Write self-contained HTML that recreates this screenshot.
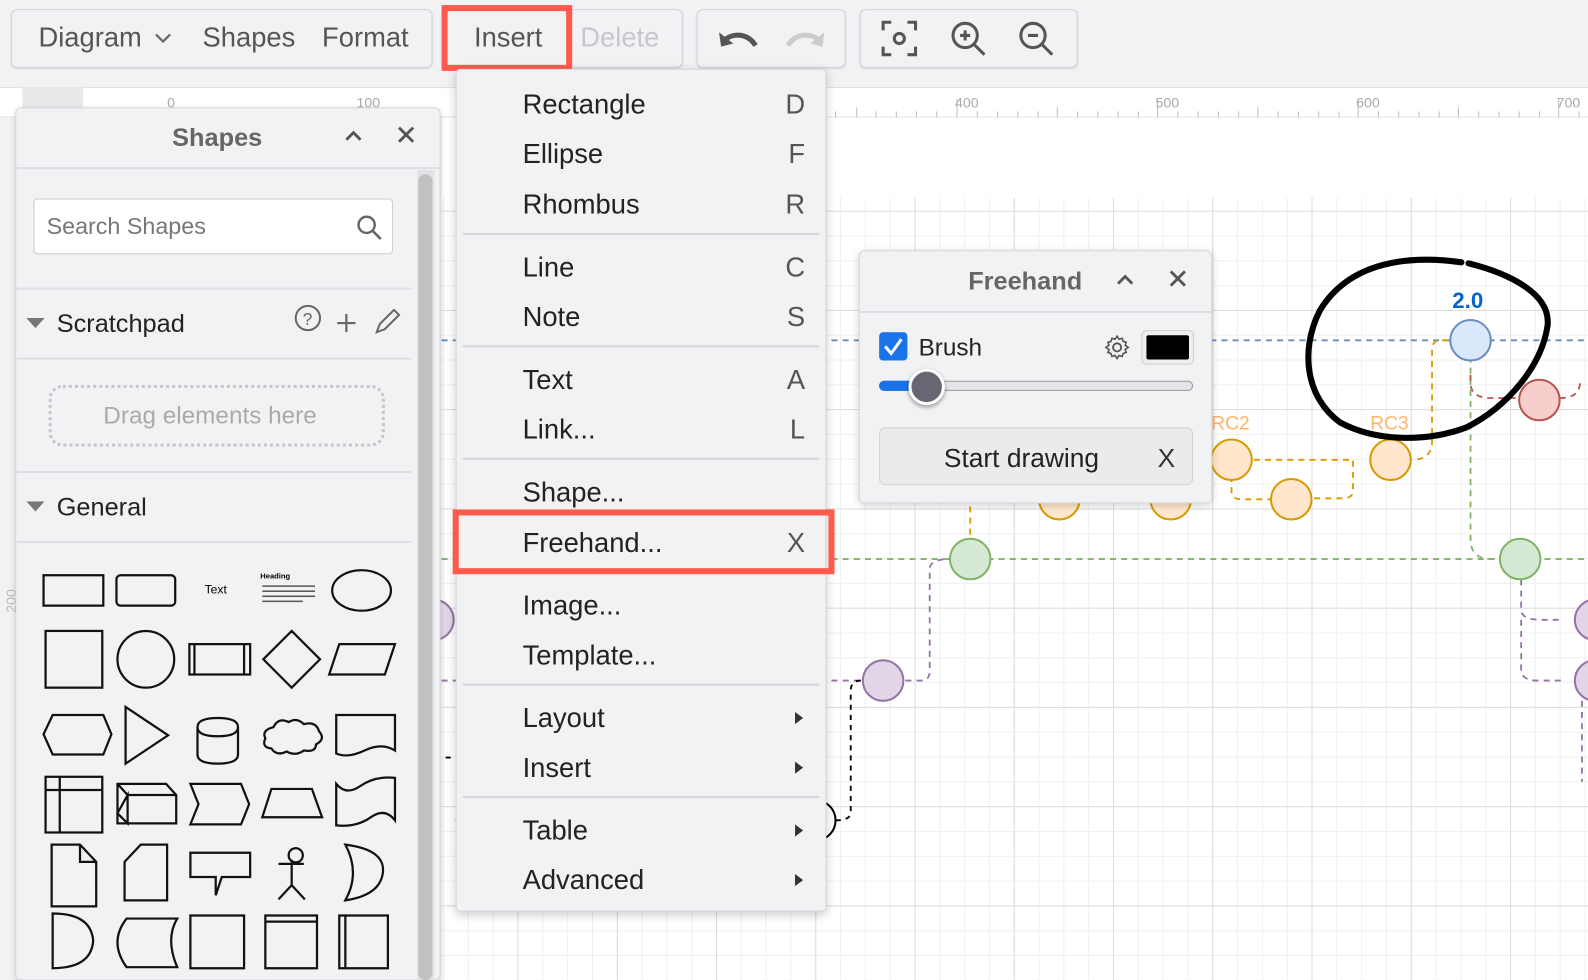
<!DOCTYPE html>
<html><head><meta charset="utf-8"><style>
*{box-sizing:border-box;margin:0;padding:0}
html,body{width:1588px;height:968px;overflow:hidden;background:#f1f2f4}
body{font-family:"Liberation Sans",sans-serif;color:#222}
#wrap{position:absolute;left:0;top:0;width:1568px;height:956px;transform:scale(1.01276);transform-origin:0 0}
.abs{position:absolute}
.grp{position:absolute;top:9px;height:58px;border:1px solid #d3d5d9;border-radius:6px;background:#f1f2f4;box-shadow:0 1px 2px rgba(0,0,0,.12)}
.tb{position:absolute;top:22px;font-size:27px;color:#555}
#canvas{position:absolute;left:436px;top:195px;width:1140px;height:773px;background-color:#fff;
background-image:linear-gradient(#dcdcdc 1px,transparent 1px),linear-gradient(90deg,#dcdcdc 1px,transparent 1px),linear-gradient(#f0f0f0 1px,transparent 1px),linear-gradient(90deg,#f0f0f0 1px,transparent 1px);
background-size:98px 98px,98px 98px,24.5px 24.5px,24.5px 24.5px;background-position:-23px 13px,-23px 13px,-23px 13px,-23px 13px}
.menu{position:absolute;left:450px;top:68px;width:366px;height:832px;background:#f1f2f4;border:1px solid #d6d8dc;border-radius:4px;box-shadow:0 3px 10px rgba(0,0,0,.2)}
.mi{position:absolute;left:65px;font-size:27px;color:#222}
.sc{position:absolute;right:20px;font-size:27px;color:#555}
.sep{position:absolute;left:6px;right:6px;height:2px;background:#d4d6da}
.arr{position:absolute;right:22px;width:0;height:0;border-left:8px solid #333;border-top:6px solid transparent;border-bottom:6px solid transparent}
</style></head><body><div id="wrap">
<div class="grp" style="left:11px;width:416px"></div>
<div class="tb" style="left:38px">Diagram</div>
<svg class="abs" style="left:152px;top:32px" width="18" height="12"><path d="M2 2l7 7 7-7" stroke="#666" stroke-width="2.2" fill="none"/></svg>
<div class="tb" style="left:200px">Shapes</div>
<div class="tb" style="left:318px">Format</div>
<div class="grp" style="left:436px;width:238px"></div>
<div class="tb" style="left:468px">Insert</div>
<div class="tb" style="left:573px;color:#c6c8cc">Delete</div>
<div class="abs" style="left:436px;top:5px;width:129px;height:65px;border:6px solid #ff5a4e"></div>
<div class="grp" style="left:688px;width:147px"></div>
<svg class="abs" style="left:704px;top:24px" width="120" height="32"><path d="M6 8l2 14 12-3z" fill="#555"/><path d="M10 17c8-9 24-9 32 4" stroke="#555" stroke-width="5" fill="none"/><path d="M110 8l-2 14-12-3z" fill="#ccc"/><path d="M106 17c-8-9-24-9-32 4" stroke="#ccc" stroke-width="5" fill="none"/></svg>
<div class="grp" style="left:849px;width:215px"></div>
<svg class="abs" style="left:868px;top:18px" width="190" height="42"><g fill="none" stroke="#555" stroke-width="3"><path d="M4 12V4h8M28 4h8v8M36 28v8h-8M12 36H4v-8"/><circle cx="20" cy="20" r="5"/><circle cx="85" cy="17" r="12"/><path d="M94 26l10 10M80 17h10M85 12v10"/><circle cx="152" cy="17" r="12"/><path d="M161 26l10 10M147 17h10"/></g></svg>
<div class="abs" style="left:0;top:86px;width:1568px;height:30px;background:#fff;border-top:1px solid #ddd;border-bottom:1px solid #e4e4e4"></div>
<div class="abs" style="left:22px;top:86px;width:60px;height:30px;background:#e8e9eb"></div>
<svg class="abs" style="left:0;top:86px" width="1568" height="30"><g stroke="#bbb" stroke-width="1">
<path d="M945 12v18M1143 12v18M1341 12v18M1539 12v18M846 20v10M1044 20v10M1242 20v10M1440 20v10M825 24v6M865 24v6M885 24v6M905 24v6M925 24v6M965 24v6M985 24v6M1005 24v6M1025 24v6M1064 24v6M1084 24v6M1104 24v6M1124 24v6M1163 24v6M1183 24v6M1203 24v6M1223 24v6M1262 24v6M1282 24v6M1302 24v6M1322 24v6M1361 24v6M1381 24v6M1401 24v6M1421 24v6M1460 24v6M1480 24v6M1500 24v6M1520 24v6M1559 24v6"/></g>
<g fill="#aaa" font-size="14" font-family="Liberation Sans"><text x="943" y="20">400</text><text x="1141" y="20">500</text><text x="1339" y="20">600</text><text x="1537" y="20">700</text><text x="165" y="20">0</text><text x="352" y="20">100</text></g></svg>
<div class="abs" style="left:436px;top:116px;width:1140px;height:79px;background:#fff"></div>
<div id="canvas"></div>
<svg class="abs" style="left:0;top:0" width="1568" height="956">
<g fill="none" stroke-width="1.8" stroke-dasharray="6 5">
<path d="M436 336H1568" stroke="#6c8ebf"/>
<path d="M436 552H1568" stroke="#82b366"/>
<path d="M1452 352v180q0 20 20 20" stroke="#82b366"/>
<path d="M1452 336h-30q-8 0-8 10v90q0 18-20 18M1216 454h120v30q0 8-10 8h-32M1216 470v15q0 8 10 8h30M958 500v30" stroke="#d79b00"/>
<path d="M1452 370v8q0 15 20 15h30M1540 393q20 0 20-15" stroke="#b85450"/>
<path d="M1502 572v30q0 10 20 10h20M1502 612v48q0 12 15 12h25M872 672h38q8 0 8-10V562q0-10 20-10M436 672h416M1562 692v80" stroke="#9673a6"/>
<path d="M850 672q-10 0-10 10v120q0 8-15 8M825 810h-380M445 748h-10" stroke="#000" stroke-dasharray="5 5"/>
</g>
<g stroke-width="2">
<circle cx="1452" cy="336" r="20" fill="#dae8fc" stroke="#6c8ebf"/>
<circle cx="1520" cy="395" r="20" fill="#f8cecc" stroke="#b85450"/>
<circle cx="1216" cy="454" r="20" fill="#ffe6cc" stroke="#d79b00"/>
<circle cx="1373" cy="454" r="20" fill="#ffe6cc" stroke="#d79b00"/>
<circle cx="1275" cy="493" r="20" fill="#ffe6cc" stroke="#d79b00"/>
<circle cx="1046" cy="493" r="20" fill="#ffe6cc" stroke="#d79b00"/>
<circle cx="1156" cy="493" r="20" fill="#ffe6cc" stroke="#d79b00"/>
<circle cx="958" cy="552" r="20" fill="#d5e8d4" stroke="#82b366"/>
<circle cx="1501" cy="552" r="20" fill="#d5e8d4" stroke="#82b366"/>
<circle cx="872" cy="672" r="20" fill="#e1d5e7" stroke="#9673a6"/>
<circle cx="1575" cy="612" r="20" fill="#e1d5e7" stroke="#9673a6"/>
<circle cx="1575" cy="672" r="20" fill="#e1d5e7" stroke="#9673a6"/>
<circle cx="428" cy="612" r="20" fill="#e1d5e7" stroke="#9673a6"/>
<circle cx="805" cy="810" r="20" fill="#fff" stroke="#000"/>
</g>
<text x="1434" y="304" font-size="22" font-weight="bold" fill="#0066cc">2.0</text>
<text x="1196" y="424" font-size="19" fill="#ffb366">RC2</text>
<text x="1353" y="424" font-size="19" fill="#ffb366">RC3</text>
<path d="M1450 260c40 10 82 30 78 62-6 40-40 80-80 100-40 15-90 14-125-5-33-24-40-70-20-110 30-50 90-55 140-48" fill="none" stroke="#000" stroke-width="6" stroke-linecap="round"/>
</svg>
<div class="abs" style="left:15px;top:106px;width:420px;height:862px;background:#f1f2f4;border:1px solid #d6d8dc;border-radius:6px;box-shadow:0 2px 6px rgba(0,0,0,.15)"></div>
<div class="abs" style="left:170px;top:122px;font-size:25px;font-weight:bold;color:#666">Shapes</div>
<svg class="abs" style="left:338px;top:122px" width="80" height="24"><path d="M4 16l7-7 7 7" stroke="#555" stroke-width="2.8" fill="none"/><path d="M56 4l14 14M70 4L56 18" stroke="#555" stroke-width="2.8"/></svg>
<div class="abs" style="left:16px;top:165px;width:418px;height:2px;background:#dcdee2"></div>
<div class="abs" style="left:412px;top:168px;width:17px;height:800px;background:#e2e3e5"></div>
<div class="abs" style="left:413px;top:172px;width:14px;height:796px;background:#c0c1c3;border-radius:7px"></div>
<div class="abs" style="left:33px;top:196px;width:355px;height:55px;background:#fff;border:1px solid #ccc;border-radius:4px"></div>
<div class="abs" style="left:46px;top:210px;font-size:23px;color:#777">Search Shapes</div>
<svg class="abs" style="left:350px;top:210px" width="30" height="30"><circle cx="12" cy="12" r="8" fill="none" stroke="#666" stroke-width="2.4"/><path d="M18 18l8 8" stroke="#666" stroke-width="2.6"/></svg>
<div class="abs" style="left:16px;top:284px;width:390px;height:2px;background:#dcdee2"></div>
<svg class="abs" style="left:26px;top:314px" width="18" height="12"><path d="M0 0h18L9 10z" fill="#777"/></svg>
<div class="abs" style="left:56px;top:306px;font-size:25px">Scratchpad</div>
<svg class="abs" style="left:288px;top:300px" width="110" height="34"><circle cx="16" cy="14" r="12" fill="none" stroke="#666" stroke-width="2"/><text x="11" y="21" font-size="17" fill="#666">?</text><path d="M54 10v18M45 19h18" stroke="#666" stroke-width="2.2"/><path d="M84 28l3-8 14-14 5 5-14 14z" fill="none" stroke="#666" stroke-width="2"/></svg>
<div class="abs" style="left:16px;top:353px;width:390px;height:2px;background:#dcdee2"></div>
<div class="abs" style="left:48px;top:380px;width:332px;height:61px;border:3px dotted #c4c6ca;border-radius:14px"></div>
<div class="abs" style="left:102px;top:397px;font-size:24px;color:#aaa">Drag elements here</div>
<div class="abs" style="left:16px;top:465px;width:390px;height:2px;background:#dcdee2"></div>
<svg class="abs" style="left:26px;top:495px" width="18" height="12"><path d="M0 0h18L9 10z" fill="#777"/></svg>
<div class="abs" style="left:56px;top:487px;font-size:25px">General</div>
<div class="abs" style="left:16px;top:534px;width:390px;height:2px;background:#dcdee2"></div>
<svg class="abs" style="left:0;top:540px" width="410" height="428"><g fill="none" stroke="#111" stroke-width="2.2">
<rect x="43" y="28" width="59" height="30"/><rect x="115" y="28" width="58" height="30" rx="4"/><ellipse cx="357" cy="43" rx="29" ry="20"/>
<rect x="45" y="83" width="56" height="56"/><circle cx="144" cy="111" r="28"/><rect x="187" y="96" width="60" height="30"/><path d="M192 96v30M241 96v30M288 83l28 28-28 28-28-28zM335 96h55l-10 30h-55z"/>
<path d="M52 166h50l8 19-8 20H52l-9-20zM124 158l42 28-42 28zM195 178v27q0 9 20 9t20-9v-27q0-9-20-9t-20 9q0 9 20 9t20-9"/>
<path d="M270 178q5-10 15-5q8-5 15 2q12-3 15 7q7 8-3 13q0 8-12 6q-8 6-17 1q-10 5-15-3q-10-1-6-10q-4-8 8-11z"/>
<path d="M332 166h58v35q-13-8-30 0t-28 3z"/>
<rect x="45" y="227" width="56" height="55"/><path d="M45 240h56M59 227v55M116 234h48l10 11v28h-58zM116 234l10 11h48M126 245v28l-10-10z"/><path d="M188 234h50l8 20-8 20h-50l8-20zM268 239h40l10 28h-59zM332 234q10 12 24 2t34-8v42q-10-13-24-3t-34 8z"/>
<path d="M51 294h28l16 17v44H51zM79 294v17h16M139 294h26v55h-42v-38zM188 302h59v24h-28l-6 18v-18h-25zM299 305a7 7 0 1 1 0-1zM275 313h25M288 309v25l-13 14M288 334l13 14M341 294q40 5 37 28q-3 22-37 27q15-27 0-55z"/>
<path d="M52 362q38 0 40 27q-2 27-40 27zM125 367h50q-12 20 0 48h-50q-18-25 0-48zM188 364h53v52h-53zM262 364h51v52h-51zM262 370h51M335 364h48v52h-48zM341 364v52"/>
</g><text x="202" y="46" font-size="12" fill="#000">Text</text><text x="257" y="31" font-size="7.5" font-weight="bold">Heading</text>
<g fill="#555"><rect x="259" y="38" width="52" height="1.5"/><rect x="259" y="43" width="52" height="1.5"/><rect x="259" y="48" width="52" height="1.5"/><rect x="259" y="53" width="40" height="1.5"/></g></svg>
<div class="abs" style="font-size:14px;color:#bbb;transform:rotate(-90deg);transform-origin:0 0;top:605px;left:3px">200</div>
<div class="menu">
<div class="mi" style="top:19px">Rectangle</div><div class="sc" style="top:19px">D</div>
<div class="mi" style="top:68px">Ellipse</div><div class="sc" style="top:68px">F</div>
<div class="mi" style="top:118px">Rhombus</div><div class="sc" style="top:118px">R</div>
<div class="sep" style="top:161px"></div>
<div class="mi" style="top:180px">Line</div><div class="sc" style="top:180px">C</div>
<div class="mi" style="top:229px">Note</div><div class="sc" style="top:229px">S</div>
<div class="sep" style="top:272px"></div>
<div class="mi" style="top:291px">Text</div><div class="sc" style="top:291px">A</div>
<div class="mi" style="top:340px">Link...</div><div class="sc" style="top:340px">L</div>
<div class="sep" style="top:383px"></div>
<div class="mi" style="top:402px">Shape...</div>
<div class="mi" style="top:452px">Freehand...</div><div class="sc" style="top:452px">X</div>
<div class="mi" style="top:514px">Image...</div>
<div class="mi" style="top:563px">Template...</div>
<div class="sep" style="top:606px"></div>
<div class="mi" style="top:625px">Layout</div><div class="arr" style="top:634px"></div>
<div class="mi" style="top:674px">Insert</div><div class="arr" style="top:683px"></div>
<div class="sep" style="top:717px"></div>
<div class="mi" style="top:736px">Table</div><div class="arr" style="top:745px"></div>
<div class="mi" style="top:785px">Advanced</div><div class="arr" style="top:794px"></div>
</div>
<div class="abs" style="left:447px;top:503px;width:377px;height:64px;border:6px solid #ff5a4e"></div>
<div class="abs" style="left:848px;top:247px;width:349px;height:250px;background:#f1f2f4;border:1px solid #d6d8dc;border-radius:6px;box-shadow:0 2px 8px rgba(0,0,0,.18)"></div>
<div class="abs" style="left:956px;top:264px;font-size:25px;font-weight:bold;color:#666">Freehand</div>
<svg class="abs" style="left:1100px;top:264px" width="80" height="24"><path d="M4 16l7-7 7 7" stroke="#555" stroke-width="2.8" fill="none"/><path d="M56 4l14 14M70 4L56 18" stroke="#555" stroke-width="2.8"/></svg>
<div class="abs" style="left:849px;top:307px;width:347px;height:2px;background:#dcdee2"></div>
<svg class="abs" style="left:868px;top:328px" width="30" height="30"><rect width="28" height="28" rx="4" fill="#1a73e8"/><path d="M6 14l6 7 10-14" stroke="#fff" stroke-width="3" fill="none"/></svg>
<div class="abs" style="left:907px;top:330px;font-size:24px">Brush</div>
<svg class="abs" style="left:1090px;top:330px" width="28" height="28"><circle cx="13" cy="13" r="4" fill="none" stroke="#555" stroke-width="1.8"/><path d="M13 2l2 3 3-1 1 3 3 1-1 3 3 2-3 2 1 3-3 1-1 3-3-1-2 3-2-3-3 1-1-3-3-1 1-3-3-2 3-2-1-3 3-1 1-3 3 1z" fill="none" stroke="#555" stroke-width="1.6"/></svg>
<div class="abs" style="left:1127px;top:326px;width:52px;height:34px;border:1px solid #ccc;border-radius:5px;background:#eee"></div>
<div class="abs" style="left:1132px;top:331px;width:42px;height:24px;background:#000;border-radius:2px"></div>
<div class="abs" style="left:868px;top:376px;width:310px;height:10px;border-radius:5px;background:#e4e5e8;border:1px solid #999"></div>
<div class="abs" style="left:868px;top:376px;width:44px;height:10px;border-radius:5px;background:#1a73e8"></div>
<div class="abs" style="left:897px;top:364px;width:36px;height:36px;border-radius:50%;background:#676774;border:3px solid #fff;box-shadow:0 2px 4px rgba(0,0,0,.4)"></div>
<div class="abs" style="left:868px;top:422px;width:310px;height:57px;border:1px solid #d0d2d6;border-radius:6px;background:#ebebec"></div>
<div class="abs" style="left:932px;top:437px;font-size:26px">Start drawing</div>
<div class="abs" style="left:1143px;top:437px;font-size:26px;color:#333">X</div>
</div></body></html>
